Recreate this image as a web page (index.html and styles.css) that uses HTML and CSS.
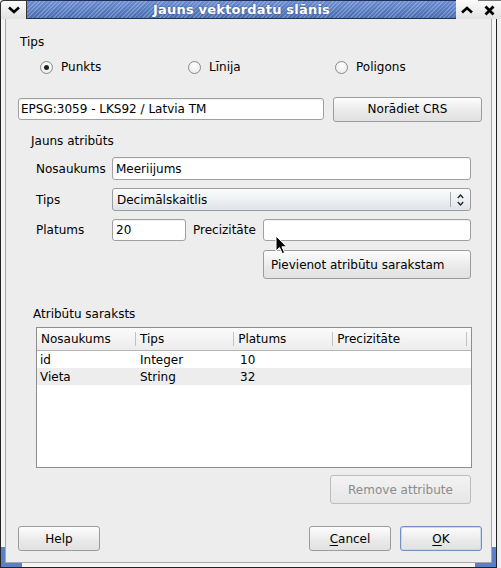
FILE: index.html
```html
<!DOCTYPE html>
<html>
<head>
<meta charset="utf-8">
<link rel="stylesheet" href="styles.css">
</head>
<body>
<div class="window">
  <div class="titlebar">
    <div class="tb-btn tb-menu"><svg width="12" height="8" viewBox="0 0 12 8"><path d="M1 1.5 L6 6 L11 1.5" fill="none" stroke="#000" stroke-width="2.6"/></svg></div>
    <div class="tb-title">Jauns vektordatu slānis</div>
    <div class="tb-btn tb-up"><svg width="12" height="8" viewBox="0 0 12 8"><path d="M1 6.5 L6 2 L11 6.5" fill="none" stroke="#000" stroke-width="2.6"/></svg></div>
    <div class="tb-btn tb-close"><svg width="11" height="11" viewBox="0 0 11 11"><path d="M1.5 1.5 L9.5 9.5 M9.5 1.5 L1.5 9.5" fill="none" stroke="#000" stroke-width="2.8"/></svg></div>
  </div>
  <div class="frame">
    <div class="content">
      <div class="glabel tips-label">Tips</div>
      <div class="radios">
        <div class="radio"><span class="rb checked"></span>Punkts</div>
        <div class="radio"><span class="rb"></span>Līnija</div>
        <div class="radio"><span class="rb"></span>Poligons</div>
      </div>
      <div class="crs-row">
        <div class="input crs">EPSG:3059 - LKS92 / Latvia TM</div>
        <div class="btn crs-btn">Norādiet CRS</div>
      </div>
      <div class="glabel attr-label">Jauns atribūts</div>
      <div class="form">
        <div class="row r1"><span class="flabel">Nosaukums</span><div class="input name">Meeriijums</div></div>
        <div class="row r2"><span class="flabel">Tips</span><div class="combo"><span class="combo-text">Decimālskaitlis</span><span class="combo-sep"></span><svg class="combo-arrow" width="7" height="14" viewBox="0 0 7 14"><path d="M0.8 5 L3.5 2 L6.2 5 M0.8 9 L3.5 12 L6.2 9" fill="none" stroke="#222" stroke-width="1.3"/></svg></div></div>
        <div class="row r3"><span class="flabel">Platums</span><div class="input width">20</div><span class="plabel">Precizitāte</span><div class="input prec"></div></div>
        <div class="row r4"><div class="btn add-btn">Pievienot atribūtu sarakstam</div></div>
      </div>
      <div class="glabel list-label">Atribūtu saraksts</div>
      <div class="table">
        <div class="thead">
          <div class="th c1">Nosaukums</div>
          <div class="th c2">Tips</div>
          <div class="th c3">Platums</div>
          <div class="th c4">Precizitāte</div>
          <div class="th c5"></div>
        </div>
        <div class="tr">
          <div class="td c1">id</div>
          <div class="td c2">Integer</div>
          <div class="td c3">10</div>
          <div class="td c4"></div>
        </div>
        <div class="tr alt">
          <div class="td c1">Vieta</div>
          <div class="td c2">String</div>
          <div class="td c3">32</div>
          <div class="td c4"></div>
        </div>
      </div>
      <div class="remove-row"><div class="btn disabled remove-btn">Remove attribute</div></div>
      <div class="bottom">
        <div class="btn dlg-btn">Help</div>
        <div class="spacer"></div>
        <div class="btn dlg-btn"><u>C</u>ancel</div>
        <div class="btn dlg-btn default"><u>O</u>K</div>
      </div>
    </div>
  </div>
  <span class="corner corner-bl"></span>
  <span class="corner corner-br"></span>
  <svg class="cursor" width="13" height="20" viewBox="0 0 13 20"><path d="M1 1 L1 16 L4.5 12.6 L7.3 18.6 L9.6 17.6 L6.9 11.8 L11.6 11.8 Z" fill="#000" stroke="#fff" stroke-width="1" stroke-linejoin="round"/></svg>
</div>
</body>
</html>
```

FILE: styles.css
```css
* { box-sizing: border-box; }

body {
  margin: 0;
  width: 501px;
  height: 568px;
  overflow: hidden;
  background: #eeeeee;
  font-family: "DejaVu Sans", "Liberation Sans", sans-serif;
  font-size: 12px;
  color: #000;
}

.window {
  position: relative;
  width: 501px;
  height: 568px;
}

/* ---------- title bar ---------- */
.titlebar {
  display: flex;
  height: 19px;
  background: #f2f2f2;
  border-top-left-radius: 4px;
  border-top-right-radius: 4px;
}

.tb-btn {
  display: flex;
  align-items: center;
  justify-content: center;
  background: linear-gradient(#fbfbfb, #e2e2e2);
}

.tb-menu {
  width: 27px;
  border-left: 1px solid #333;
  border-top: 1px solid #333;
  border-right: 1px solid #333;
  border-top-left-radius: 4px;
}

.tb-up { width: 22px; }

.tb-close {
  width: 23px;
  border-top: 1px solid #777;
}

.tb-title {
  flex: 1;
  display: flex;
  align-items: center;
  justify-content: center;
  color: #fff;
  font-weight: bold;
  font-size: 13px;
  letter-spacing: 0.2px;
  text-shadow: 0 0 2px #2f4680;
  border-top: 1px solid #1f2f5a;
  border-bottom: 1px solid #1f2f5a;
  background:
    repeating-linear-gradient(135deg, rgba(255,255,255,0.22) 0 1.2px, rgba(255,255,255,0) 1.2px 3px),
    linear-gradient(#6a8dd2, #4a6db2);
}

/* ---------- frame ---------- */
.frame {
  width: 497px;
  height: 549px;
  background: #f4f4f4;
  border-left: 1px solid #222;
  border-right: 1px solid #222;
  border-bottom: 1px solid #222;
  padding: 0 4px 4px 4px;
}

.content {
  height: 544px;
  background: #ededed;
  border-left: 1px solid #a6a6a6;
  border-right: 1px solid #a6a6a6;
  border-bottom: 1px solid #a6a6a6;
  display: flex;
  flex-direction: column;
}

.corner {
  position: absolute;
  background: #5b7ec4;
}
.corner-bl { left: 1px; bottom: 1px; width: 21px; height: 4px; }
.corner-br { right: 5px; bottom: 1px; width: 21px; height: 4px; }
.corner-bl::before, .corner-br::before {
  content: "";
  position: absolute;
  bottom: 0;
  width: 4px;
  height: 20px;
  background: #5b7ec4;
}
.corner-bl::before { left: 0; }
.corner-br::before { right: 0; }

/* ---------- labels ---------- */
.glabel {
  height: 15px;
  line-height: 15px;
  white-space: nowrap;
}
.tips-label { margin: 16px 0 0 14px; }
.attr-label { margin: 13px 0 0 25px; }
.list-label { margin: 28px 0 0 27px; }

/* ---------- radios ---------- */
.radios {
  display: grid;
  grid-template-columns: 148px 147px 140px;
  margin: 9px 0 0 34px;
  height: 16px;
}
.radio {
  display: flex;
  align-items: center;
  gap: 8px;
  line-height: 16px;
}
.rb {
  width: 13px;
  height: 13px;
  border-radius: 50%;
  border: 1px solid #8a8a8a;
  background: radial-gradient(circle at 50% 35%, #ffffff, #e6e6e6);
  display: flex;
  align-items: center;
  justify-content: center;
}
.rb.checked::after {
  content: "";
  width: 5px;
  height: 5px;
  border-radius: 50%;
  background: #222;
}

/* ---------- inputs & buttons ---------- */
.input {
  background: #fff;
  border: 1px solid #a0a0a0;
  border-radius: 3px;
  padding-left: 3px;
  display: flex;
  align-items: center;
  white-space: nowrap;
  box-shadow: inset 0 1px 1px rgba(0,0,0,0.06);
}

.btn {
  display: flex;
  align-items: center;
  justify-content: center;
  white-space: nowrap;
  border: 1px solid #9c9c9c;
  border-radius: 3px;
  background: linear-gradient(#fdfdfd, #e9e9e9 60%, #e2e2e2);
}
.btn u { text-decoration: underline; text-underline-offset: 2px; }

.btn.disabled {
  color: #8b8b8b;
  border-color: #bdbdbd;
  background: linear-gradient(#f3f3f3, #e6e6e6);
}

.btn.default {
  border-color: #7590c0;
  box-shadow: inset 0 0 0 1px #c8d6ee;
}

/* ---------- CRS row ---------- */
.crs-row {
  display: flex;
  align-items: center;
  gap: 9px;
  margin: 22px 0 0 12px;
  width: 464px;
  height: 24px;
}
.crs { width: 306px; height: 22px; padding-left: 2px; }
.crs-btn { width: 149px; height: 25px; }

/* ---------- form ---------- */
.form {
  display: flex;
  flex-direction: column;
  margin: 8px 0 0 30px;
  width: 435px;
}
.row {
  display: flex;
  align-items: center;
}
.flabel { width: 76px; }
.r1 { height: 23px; }
.r1 .name { flex: 1; height: 23px; padding-left: 3px; }
.r2 { height: 23px; margin-top: 8px; }
.combo {
  flex: 1;
  height: 23px;
  border: 1px solid #9c9c9c;
  border-radius: 3px;
  background: linear-gradient(#fcfcfc, #eef0f3 50%, #dfe3ea);
  display: flex;
  align-items: center;
  padding-left: 4px;
}
.combo-text { flex: 1; }
.combo-sep {
  width: 1px;
  height: 15px;
  background: #a9a9a9;
  margin-right: 6px;
}
.combo-arrow { margin-right: 6px; }

.r3 { height: 22px; margin-top: 8px; }
.r3 .width { width: 74px; height: 22px; padding-left: 3px; }
.plabel { margin-left: 7px; width: 70px; }
.r3 .prec { flex: 1; height: 22px; }

.r4 { height: 29px; margin-top: 9px; justify-content: flex-end; }
.add-btn {
  width: 208px;
  height: 29px;
  justify-content: flex-start;
  padding-left: 7px;
}

/* ---------- table ---------- */
.table {
  margin: 5px 0 0 30px;
  width: 436px;
  height: 141px;
  background: #fff;
  border: 1px solid #8e8e8e;
}
.thead {
  display: flex;
  height: 23px;
  background: linear-gradient(#fbfbfb, #ececec);
  border-bottom: 1px solid #b4b4b4;
}
.th {
  display: flex;
  align-items: center;
  padding-left: 4px;
  position: relative;
}
.th::after {
  content: "";
  position: absolute;
  right: 0;
  top: 4px;
  bottom: 4px;
  width: 1px;
  background: #c2c2c2;
}
.th.c5::after { display: none; }
.c1 { width: 100px; }
.c2 { width: 99px; }
.c3 { width: 100px; }
.c4 { width: 135px; }
.c5 { flex: 1; }

.tr {
  display: flex;
  height: 17px;
  align-items: center;
}
.tr.alt { background: #ededed; }
.td { padding-left: 3px; white-space: nowrap; }
.td.c3 { padding-left: 4px; }

/* ---------- bottom ---------- */
.remove-row {
  display: flex;
  justify-content: flex-end;
  margin-top: 7px;
  width: 465px;
}
.remove-btn { width: 141px; height: 29px; }

.bottom {
  display: flex;
  margin: 22px 0 0 12px;
  width: 464px;
  gap: 9px;
}
.spacer { flex: 1; }
.dlg-btn { width: 82px; height: 25px; }

/* ---------- cursor ---------- */
.cursor {
  position: absolute;
  left: 275px;
  top: 235px;
}
```
